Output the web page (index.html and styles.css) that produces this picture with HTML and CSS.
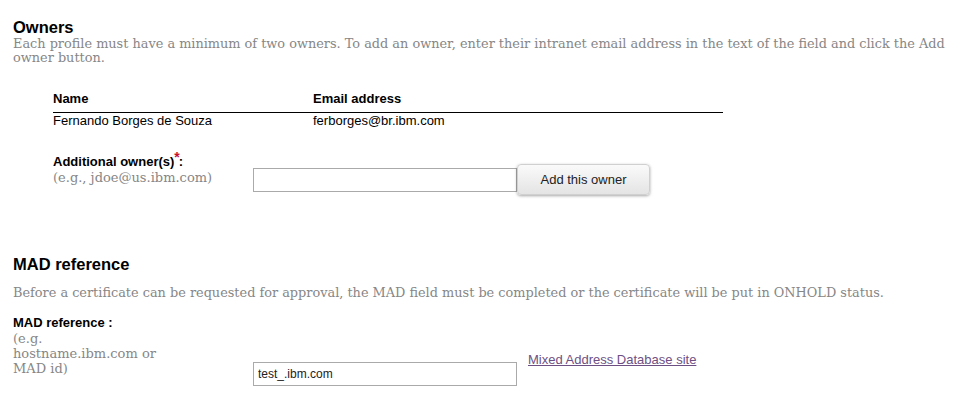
FILE: index.html
```html
<!DOCTYPE html>
<html>
<head>
<meta charset="utf-8">
<link rel="stylesheet" href="styles.css">
</head>
<body>
<div class="page">
  <section class="section owners">
    <h2 class="heading">Owners</h2>
    <p class="desc">Each profile must have a minimum of two owners. To add an owner, enter their intranet email address in the text of the field and click the Add owner button.</p>
    <div class="owner-table">
      <div class="row head">
        <div class="col-name">Name</div>
        <div class="col-email">Email address</div>
      </div>
      <div class="row">
        <div class="col-name">Fernando Borges de Souza</div>
        <div class="col-email">ferborges@br.ibm.com</div>
      </div>
    </div>
    <div class="field add-owner">
      <div class="label">
        <div class="label-title">Additional owner(s)<span class="req">*</span>:</div>
        <div class="hint">(e.g., jdoe@us.ibm.com)</div>
      </div>
      <div class="control">
        <input class="text-input" type="text">
        <button class="btn" type="button">Add this owner</button>
      </div>
    </div>
  </section>

  <section class="section mad">
    <h2 class="heading">MAD reference</h2>
    <p class="desc">Before a certificate can be requested for approval, the MAD field must be completed or the certificate will be put in ONHOLD status.</p>
    <div class="field mad-field">
      <div class="label mad-label">
        <div class="label-title">MAD reference :</div>
        <div class="hint">(e.g.<br>hostname.ibm.com or<br>MAD id)</div>
      </div>
      <div class="control mad-control">
        <input class="text-input" type="text" value="test_.ibm.com">
        <a class="link" href="#">Mixed Address Database site</a>
      </div>
    </div>
  </section>
</div>
</body>
</html>
```

FILE: styles.css
```css
html, body {
  margin: 0;
  padding: 0;
  background: #fff;
}
.page {
  padding: 17px 13px 0 13px;
  font-family: "Liberation Sans", Arial, sans-serif;
  font-size: 13px;
  color: #000;
}
.section {
  display: flex;
  flex-direction: column;
}
.heading {
  margin: 0;
  font-size: 16.5px;
  font-weight: bold;
  line-height: 20px;
}
.desc {
  margin: 0;
  width: 945px;
  font-family: "DejaVu Serif", serif;
  font-size: 12.87px;
  line-height: 14px;
  color: #868686;
}
.owner-table {
  margin: 26px 0 0 40px;
  width: 670px;
}
.row {
  display: flex;
  line-height: 16px;
  font-size: 13px;
}
.row.head {
  font-weight: bold;
  border-bottom: 1px solid #000;
  padding-bottom: 5px;
  margin-bottom: 0;
}
.col-name { width: 260px; }
.col-email { flex: 1; }

.field {
  display: flex;
  align-items: flex-start;
}
.add-owner {
  margin: 25px 0 0 40px;
}
.add-owner .label {
  width: 200px;
}
.label-title {
  font-weight: bold;
  line-height: 16px;
}
.req {
  color: #c8102e;
  font-size: 14px;
  vertical-align: 4px;
  line-height: 0;
  margin-right: -1px;
}
.hint {
  font-family: "DejaVu Serif", serif;
  color: #868686;
  font-size: 13px;
  line-height: 15px;
}
.control {
  display: flex;
  align-items: center;
}
.add-owner .control {
  margin-top: 10px;
}
.text-input {
  box-sizing: border-box;
  width: 264px;
  height: 24px;
  margin: 0;
  border: 1px solid #aaa;
  padding: 0 4px;
  font-family: "Liberation Sans", Arial, sans-serif;
  font-size: 12px;
  color: #222;
  background: #fff;
  outline: none;
}
.btn {
  box-sizing: border-box;
  width: 133px;
  height: 31px;
  margin: 0;
  border: 1px solid #d0d0d0;
  border-radius: 4px;
  background: linear-gradient(#fafafa, #e4e4e4);
  box-shadow: 0 1px 3px rgba(0,0,0,0.35);
  font-family: "Liberation Sans", Arial, sans-serif;
  font-size: 13px;
  color: #222;
  padding: 0;
}
.mad {
  margin-top: 59px;
}
.mad .desc {
  margin-top: 12px;
}
.mad-field {
  margin-top: 15px;
}
.mad-label {
  width: 240px;
}
.mad-label .hint {
  width: 150px;
}
.mad-control {
  margin-top: 47px;
  align-items: flex-start;
}
.link {
  margin: -10px 0 0 11px;
  color: #6e4f84;
  text-decoration: underline;
  font-size: 13px;
}
```
